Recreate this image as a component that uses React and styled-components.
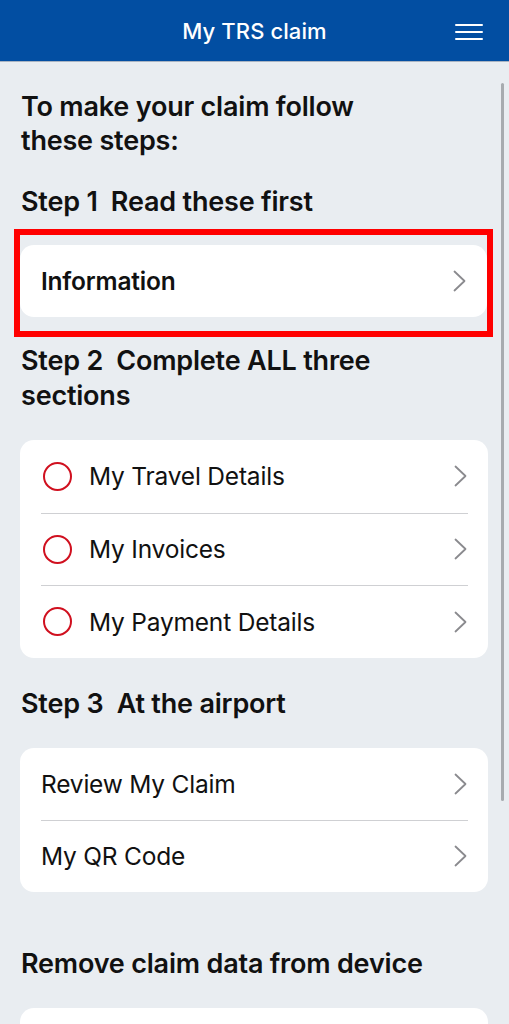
import React from 'react';
import styled, { createGlobalStyle } from 'styled-components';

const GlobalStyle = createGlobalStyle`
  html, body {
    margin: 0;
    padding: 0;
    background: #e9edf1;
    font-family: Inter, 'Noto Sans', sans-serif;
    color: #111;
  }
  * { box-sizing: border-box; }
`;

const Chevron = () => (
  <svg width="13" height="22" viewBox="0 0 13 22" fill="none">
    <path d="M1.5 1.5l10 9.5-10 9.5" stroke="#8a8a8e" strokeWidth="1.8" strokeLinecap="round" strokeLinejoin="round" />
  </svg>
);

const App = () => {
  return (
    <>
      <GlobalStyle />
      <Page>
        <Header>
          <Title>My TRS claim</Title>
          <MenuButton aria-label="menu">
            <span />
            <span />
            <span />
          </MenuButton>
        </Header>
        <Body>
          <Intro>To make your claim follow these steps:</Intro>
          <StepTitle gap={26}>Step 1&nbsp; Read these first</StepTitle>
          <Highlight>
            <Card>
              <Row>
                <Label bold>Information</Label>
                <Chevron />
              </Row>
            </Card>
          </Highlight>
          <StepTitle gap={6} narrow>Step 2&nbsp; Complete ALL three sections</StepTitle>
          <Card>
            {['My Travel Details', 'My Invoices', 'My Payment Details'].map((t) => (
              <Row key={t} tall>
                <Status />
                <Label>{t}</Label>
                <Chevron />
              </Row>
            ))}
          </Card>
          <StepTitle gap={28}>Step 3&nbsp; At the airport</StepTitle>
          <Card>
            <Row>
              <Label>Review My Claim</Label>
              <Chevron />
            </Row>
            <Row>
              <Label>My QR Code</Label>
              <Chevron />
            </Row>
          </Card>
          <StepTitle gap={54}>Remove claim data from device</StepTitle>
          <Card>
            <Row />
          </Card>
        </Body>
        <Scrollbar />
      </Page>
    </>
  );
};

const Page = styled.div`
  position: relative;
  width: 509px;
  height: 1024px;
  overflow: hidden;
`;

const Header = styled.header`
  height: 62px;
  background: #024ea2;
  border-bottom: 1px solid #a9b4c2;
  display: flex;
  align-items: center;
  justify-content: center;
  position: relative;
`;

const Title = styled.h1`
  margin: 0;
  color: #fff;
  font-size: 22px;
  font-weight: 500;
  letter-spacing: 0.1px;
`;

const MenuButton = styled.div`
  position: absolute;
  right: 26px;
  top: 24px;
  width: 28px;
  display: flex;
  flex-direction: column;
  gap: 5px;

  span {
    display: block;
    height: 2px;
    background: #fff;
    border-radius: 1px;
  }
`;

const Body = styled.main`
  padding: 28px 21px 0 20px;
`;

const Intro = styled.h2`
  margin: 0 0 0 1px;
  max-width: 360px;
  font-size: 27px;
  font-weight: 600;
  line-height: 34px;
  letter-spacing: -0.2px;
`;

const StepTitle = styled.h3`
  margin: ${(p) => p.gap}px 0 0 1px;
  max-width: ${(p) => (p.narrow ? '400px' : 'none')};
  font-size: 27px;
  font-weight: 600;
  line-height: 35px;
  letter-spacing: -0.2px;
  white-space: ${(p) => (p.narrow ? 'normal' : 'nowrap')};
`;

const Highlight = styled.div`
  margin: 10px -5px 0 -6px;
  border: 6px solid #ff0000;
  padding: 10px 0 14px;
`;

const Card = styled.div`
  background: #fff;
  border-radius: 14px;
  ${StepTitle} + & {
    margin-top: 27px;
  }
`;

const Row = styled.div`
  height: ${(p) => (p.tall ? '72.7px' : '72px')};
  display: flex;
  align-items: center;
  gap: 17px;
  padding: 0 21px 0 22px;
  position: relative;

  & + &::before {
    content: '';
    position: absolute;
    top: 0;
    left: 21px;
    right: 20px;
    height: 1px;
    background: #cfd0d3;
  }

  svg {
    margin-left: auto;
    flex-shrink: 0;
  }
`;

const Status = styled.span`
  width: 29px;
  height: 29px;
  border: 2px solid #d0101f;
  border-radius: 50%;
  flex-shrink: 0;
  margin-left: 1px;
`;

const Label = styled.span`
  font-size: 24.5px;
  font-weight: ${(p) => (p.bold ? 600 : 400)};
  letter-spacing: -0.2px;
  margin-left: -1px;
  ${Status} + & {
    margin-left: 0;
  }
`;

const Scrollbar = styled.div`
  position: absolute;
  right: 5px;
  top: 83px;
  width: 3px;
  height: 718px;
  border-radius: 2px;
  background: #a7abaf;
`;

export default App;
